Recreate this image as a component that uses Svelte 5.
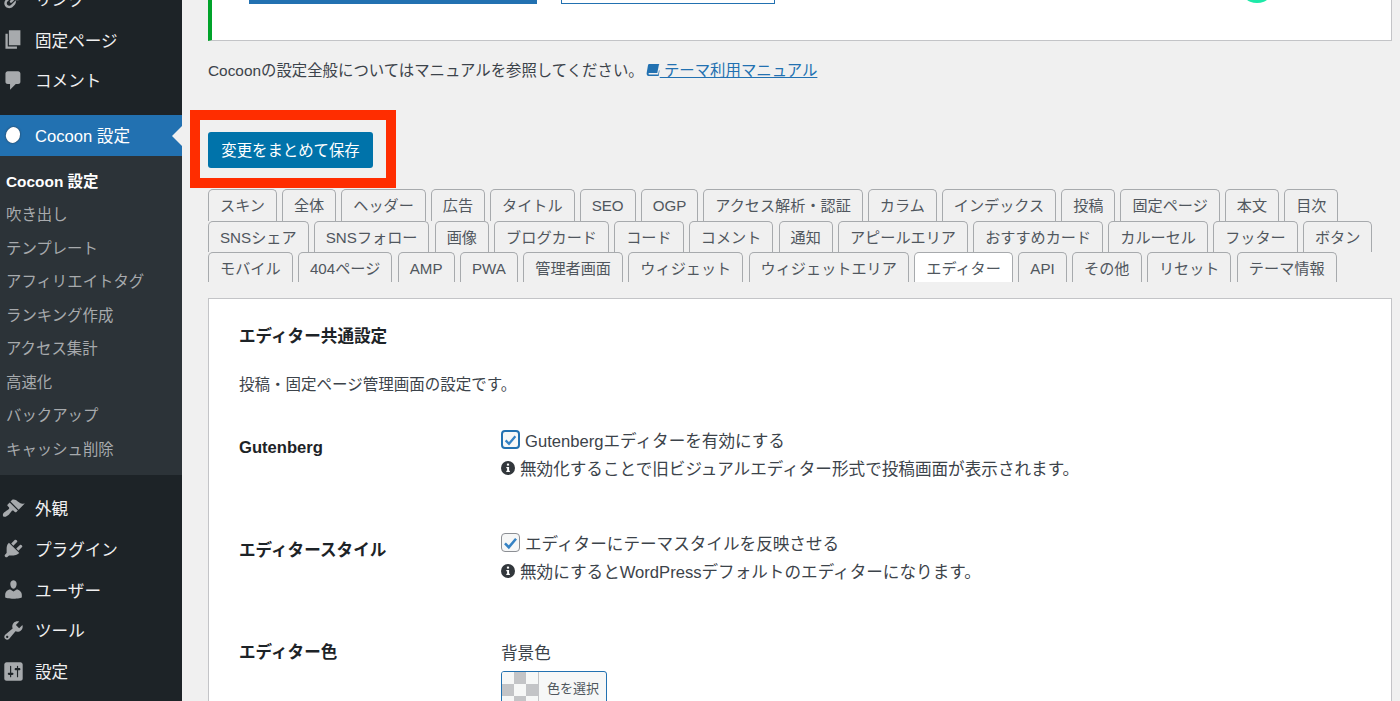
<script lang="ts">
  const icons = {
    links: 'M17.74 2.76c1.68 1.69 1.68 4.41 0 6.1l-1.53 1.52c-1.12 1.12-2.7 1.47-4.14 1.09l2.62-2.61.76-.77.76-.76c.84-.84.84-2.2 0-3.04-.84-.85-2.2-.85-3.04 0l-.77.76-3.38 3.38c-.37-1.44-.02-3.02 1.1-4.14l1.52-1.53c1.69-1.68 4.42-1.68 6.1 0zM8.59 13.43l5.34-5.34c.42-.42.42-1.1 0-1.52-.44-.43-1.13-.39-1.53 0l-5.33 5.34c-.42.42-.42 1.1 0 1.52.44.43 1.13.39 1.52 0zm-.76 2.29l4.14-4.15c.38 1.44.03 3.02-1.09 4.14l-1.52 1.53c-1.69 1.68-4.41 1.68-6.1 0-1.68-1.68-1.68-4.42 0-6.1l1.53-1.52c1.12-1.12 2.7-1.47 4.14-1.1l-4.14 4.15c-.85.84-.85 2.2 0 3.05.84.84 2.2.84 3.04 0z',
    page: 'M6 15V2h10v13H6zm-1 1h8v2H3V5h2v11z',
    comment: 'M5 2h9c1.1 0 2 .9 2 2v7c0 1.1-.9 2-2 2h-2l-5 5v-5H5c-1.1 0-2-.9-2-2V4c0-1.1.9-2 2-2z',
    brush: 'M14.48 11.06L7.41 3.99l1.5-1.5c.5-.56 2.3-.47 3.51.32 1.21.8 1.43 1.28 2.91 2.1 1.18.64 2.45 1.26 4.45.85zm-.71.71L6.7 4.7 4.93 6.47c-.39.39-.39 1.02 0 1.41l1.06 1.06c.39.39.39 1.03 0 1.42-.6.6-1.43 1.11-2.21 1.69-.35.26-.7.53-1.01.84C1.43 13.23 0 15.7 1.15 16.85c1.15 1.15 3.62-.28 4.96-1.62.31-.31.58-.66.84-1.01.58-.78 1.09-1.61 1.69-2.21.39-.39 1.03-.39 1.42 0l1.06 1.06c.39.39 1.02.39 1.41 0z',
    plugin: 'M13.11 4.36L9.87 7.6 8 5.73l3.24-3.24c.35-.34 1.05-.2 1.56.32.52.51.66 1.21.31 1.55zm-8 1.77l.91-1.12 9.01 9.01-1.19.84c-.71.71-2.63 1.16-3.82 1.16H6.14L4.9 17.26c-.59.59-1.54.59-2.12 0-.59-.58-.59-1.53 0-2.12l1.24-1.24v-3.88c0-1.13.4-3.19 1.09-3.89zm7.26 3.97l3.24-3.24c.34-.35 1.04-.21 1.55.31.52.51.66 1.21.31 1.55l-3.24 3.25z',
    user: 'M10 9.25c-2.27 0-2.73-3.44-2.73-3.44C7 4.02 7.82 2 9.97 2c2.16 0 2.98 2.02 2.71 3.81 0 0-.41 3.44-2.68 3.44zm0 2.57L12.72 10c2.39 0 4.52 2.33 4.52 4.53v2.49s-3.65 1.13-7.24 1.13c-3.65 0-7.24-1.13-7.24-1.13v-2.49c0-2.25 1.94-4.48 4.47-4.48z',
    tool: 'M16.68 9.77c-1.34 1.34-3.3 1.67-4.95.99l-5.41 6.52c-.99.99-2.59.99-3.58 0s-.99-2.59 0-3.57l6.52-5.42c-.68-1.65-.35-3.61.99-4.95 1.28-1.28 3.12-1.62 4.72-1.06l-2.89 2.89 2.82 2.82 2.86-2.87c.53 1.58.18 3.39-1.08 4.65zM3.81 16.21c.4.39 1.04.39 1.43 0 .4-.4.4-1.04 0-1.43-.39-.4-1.03-.4-1.43 0-.39.39-.39 1.03 0 1.43z',
    settings: 'M18 16V4c0-1.1-.9-2-2-2H4c-1.1 0-2 .9-2 2v12c0 1.1.9 2 2 2h12c1.1 0 2-.9 2-2zM8 11h1c.55 0 1 .45 1 1s-.45 1-1 1H8v1.5c0 .28-.22.5-.5.5s-.5-.22-.5-.5V13H6c-.55 0-1-.45-1-1s.45-1 1-1h1V5.5c0-.28.22-.5.5-.5s.5.22.5.5V11zm5-2h-1c-.55 0-1-.45-1-1s.45-1 1-1h1V5.5c0-.28.22-.5.5-.5s.5.22.5.5V7h1c.55 0 1 .45 1 1s-.45 1-1 1h-1v5.5c0 .28-.22.5-.5.5s-.5-.22-.5-.5V9z'
  };

  const topMenu = [
    { label: 'リンク', icon: icons.links },
    { label: '固定ページ', icon: icons.page },
    { label: 'コメント', icon: icons.comment }
  ];
  const subMenu = ['吹き出し', 'テンプレート', 'アフィリエイトタグ', 'ランキング作成', 'アクセス集計', '高速化', 'バックアップ', 'キャッシュ削除'];
  const bottomMenu = [
    { label: '外観', icon: icons.brush },
    { label: 'プラグイン', icon: icons.plugin },
    { label: 'ユーザー', icon: icons.user },
    { label: 'ツール', icon: icons.tool },
    { label: '設定', icon: icons.settings }
  ];

  const tabRows = [
    ['スキン', '全体', 'ヘッダー', '広告', 'タイトル', 'SEO', 'OGP', 'アクセス解析・認証', 'カラム', 'インデックス', '投稿', '固定ページ', '本文', '目次'],
    ['SNSシェア', 'SNSフォロー', '画像', 'ブログカード', 'コード', 'コメント', '通知', 'アピールエリア', 'おすすめカード', 'カルーセル', 'フッター', 'ボタン'],
    ['モバイル', '404ページ', 'AMP', 'PWA', '管理者画面', 'ウィジェット', 'ウィジェットエリア', 'エディター', 'API', 'その他', 'リセット', 'テーマ情報']
  ];
</script>

{#snippet checkbox(focused: boolean)}
  <span class="check" class:focused>
    <svg viewBox="0 0 20 20" width="18" height="18"><path d="M3.5 10.5l4.5 4.5 8.5-10" fill="none" stroke="#3582c4" stroke-width="3" /></svg>
  </span>
{/snippet}

{#snippet info()}
  <svg class="info" viewBox="0 0 14 14" width="14" height="14">
    <circle cx="7" cy="7" r="7" fill="#32373c" />
    <rect x="5.9" y="2.6" width="2.2" height="2" fill="#fff" />
    <path d="M5.3 5.9h2.8v3.8h.8v1.3H5.3V9.7h.8V7.2h-.8z" fill="#fff" />
  </svg>
{/snippet}

<div class="page">
  <aside class="sidebar">
    <ul class="menu top">
      {#each topMenu as item}
        <li><svg viewBox="0 0 20 20" width="23" height="23"><path d={item.icon} /></svg><span>{item.label}</span></li>
      {/each}
    </ul>
    <div class="current">
      <span class="blob"></span>
      <span>Cocoon 設定</span>
      <span class="arrow"></span>
    </div>
    <ul class="submenu">
      <li class="on">Cocoon 設定</li>
      {#each subMenu as item}
        <li>{item}</li>
      {/each}
    </ul>
    <ul class="menu">
      {#each bottomMenu as item}
        <li><svg viewBox="0 0 20 20" width="23" height="23"><path d={item.icon} /></svg><span>{item.label}</span></li>
      {/each}
    </ul>
  </aside>

  <main class="content">
    <div class="notice">
      <span class="bar"></span>
      <span class="outline"></span>
      <span class="mint"></span>
    </div>

    <p class="manual">
      Cocoonの設定全般についてはマニュアルを参照してください。<a href="#manual"><svg viewBox="0 0 16 14" width="14" height="12"><path d="M3.5 0H15.5l-.6 1L13 10.5H3.6c-1 0-1.3 1.7 0 1.7H14l1-5 .6.5L14.6 14H3C.8 14 .2 12 .7 10L2.2 1.2C2.4.4 2.9 0 3.5 0z" fill="#2271b1" /></svg> テーマ利用マニュアル</a>
    </p>

    <div class="save">
      <button type="button">変更をまとめて保存</button>
      <span class="marker"></span>
    </div>

    <div class="tabs">
      {#each tabRows as row}
        <div class="tab-row">
          {#each row as tab}
            <span class="tab" class:active={tab === 'エディター'}>{tab}</span>
          {/each}
        </div>
      {/each}
    </div>

    <section class="panel">
      <h3>エディター共通設定</h3>
      <p class="lead">投稿・固定ページ管理画面の設定です。</p>

      <div class="row first">
        <div class="label">Gutenberg</div>
        <div class="field">
          <div class="line">{@render checkbox(true)}Gutenbergエディターを有効にする</div>
          <div class="hint">{@render info()}無効化することで旧ビジュアルエディター形式で投稿画面が表示されます。</div>
        </div>
      </div>

      <div class="row second">
        <div class="label">エディタースタイル</div>
        <div class="field">
          <div class="line">{@render checkbox(false)}エディターにテーマスタイルを反映させる</div>
          <div class="hint">{@render info()}無効にするとWordPressデフォルトのエディターになります。</div>
        </div>
      </div>

      <div class="row third">
        <div class="label">エディター色</div>
        <div class="field">
          <div class="caption">背景色</div>
          <button class="color" type="button"><span class="swatch"></span><span class="pick">色を選択</span></button>
        </div>
      </div>
    </section>
  </main>
</div>

<style>
  :global(body) {
    margin: 0;
  }

  .page {
    display: flex;
    height: 701px;
    overflow: hidden;
    background: #f0f0f0;
    font-family: "Liberation Sans", "Noto Sans CJK JP", sans-serif;
    color: #3c434a;
  }

  ul {
    list-style: none;
    margin: 0;
    padding: 0;
  }

  .sidebar {
    flex: 0 0 182px;
    background: #1d2327;
    color: #f0f0f1;
    font-size: 16.6px;
  }

  .menu li {
    display: flex;
    align-items: center;
    height: 40.7px;
    padding-left: 1.5px;
    gap: 10.5px;
  }

  .menu.top {
    margin-top: -21.5px;
    margin-bottom: 14.4px;
  }

  .menu svg {
    fill: #a7aaad;
    flex: none;
  }

  .submenu + .menu {
    margin-top: 13px;
  }

  .current {
    position: relative;
    display: flex;
    align-items: center;
    height: 41px;
    padding-left: 6px;
    gap: 15px;
    background: #2271b1;
    color: #fff;
  }

  .blob {
    width: 14px;
    height: 16px;
    border-radius: 50%;
    background: #fff;
    box-shadow: 0 0 2px #30343a;
    transform: rotate(20deg);
  }

  .arrow {
    position: absolute;
    right: 0;
    top: 11px;
    border: 10px solid transparent;
    border-left: 0;
    border-right-color: #f0f0f0;
  }

  .submenu {
    background: #2c3338;
    padding: 7px 0 10.5px;
    font-size: 15.4px;
    color: #a7aaad;
  }

  .submenu li {
    display: flex;
    align-items: center;
    height: 33.5px;
    padding-left: 6px;
  }

  .submenu .on {
    color: #fff;
    font-weight: 700;
  }

  .content {
    flex: 1;
    padding: 0 8px 0 26px;
    min-width: 0;
  }

  .notice {
    display: flex;
    align-items: flex-start;
    height: 41px;
    overflow: hidden;
    box-sizing: border-box;
    background: #fff;
    border: 1px solid #c3c4c7;
    border-top: 0;
    border-left: 4px solid #00a32a;
    padding-left: 37px;
  }

  .bar {
    width: 288px;
    height: 4px;
    background: #2271b1;
  }

  .outline {
    width: 212px;
    height: 3px;
    margin-left: 24px;
    border: 1px solid #2271b1;
    border-top: 0;
  }

  .mint {
    width: 36px;
    height: 36px;
    margin: -33px 0 0 464px;
    border-radius: 50%;
    background: #1de9a8;
  }

  .manual {
    margin: 19px 0 0;
    height: 22px;
    line-height: 22px;
    font-size: 15.4px;
  }

  .manual a {
    color: #2271b1;
    margin-left: 2px;
  }

  .save {
    position: relative;
    margin-top: 50px;
    height: 36px;
  }

  .save button {
    display: block;
    width: 165px;
    height: 36px;
    border: 0;
    border-radius: 3px;
    background: #0073aa;
    color: #fff;
    font: inherit;
    font-size: 15.4px;
    padding: 0 0 2px;
  }

  .marker {
    position: absolute;
    left: -18px;
    top: -22px;
    width: 206px;
    height: 78px;
    box-sizing: border-box;
    border: 10px solid #ff2d00;
  }

  .tabs {
    margin-top: 21px;
  }

  .tab-row {
    display: flex;
    gap: 5px;
    height: 31.5px;
  }

  .tab-row:nth-child(2) {
    gap: 5.2px;
  }

  .tab-row:last-child {
    gap: 5.4px;
  }

  .tab {
    box-sizing: border-box;
    height: 31.5px;
    padding: 0 11px;
    line-height: 31px;
    font-size: 15.15px;
    white-space: nowrap;
    color: #50575e;
    border: 1px solid #a7aaad;
    border-bottom: 0;
    border-radius: 5px 5px 0 0;
    background: #f0f0f0;
  }

  .tab-row:last-child .tab {
    height: 30px;
  }

  .tab.active {
    background: #fff;
  }

  .panel {
    margin-top: 14px;
    height: 500px;
    box-sizing: border-box;
    background: #fff;
    border: 1px solid #c3c4c7;
    padding: 0 30px;
  }

  h3 {
    margin: 28px 0 0;
    font-size: 16.6px;
    line-height: 20px;
    color: #1d2327;
  }

  .lead {
    margin: 28px 0 0;
    font-size: 15.5px;
    line-height: 20px;
  }

  .row {
    display: flex;
  }

  .row.first {
    margin-top: 34px;
  }

  .row.second {
    margin-top: 53px;
  }

  .row.third {
    margin-top: 52px;
  }

  .label {
    flex: 0 0 262px;
    padding-top: 9px;
    font-size: 16.6px;
    font-weight: 700;
    line-height: 20px;
    color: #1d2327;
  }

  .field {
    font-size: 16.6px;
  }

  .line {
    display: flex;
    align-items: center;
    gap: 5px;
    height: 22px;
  }

  .hint {
    display: flex;
    align-items: center;
    gap: 5px;
    height: 22px;
    margin-top: 6px;
  }

  .check {
    display: flex;
    align-items: center;
    justify-content: center;
    box-sizing: border-box;
    width: 19px;
    height: 19px;
    background: #f6f7f7;
    border: 1px solid #8c8f94;
    border-radius: 4px;
  }

  .check.focused {
    border: 2px solid #2271b1;
  }

  .caption {
    height: 20px;
    margin-top: 10px;
    line-height: 20px;
  }

  .color {
    display: flex;
    width: 106px;
    height: 40px;
    margin-top: 7px;
    padding: 0;
    box-sizing: border-box;
    border: 1px solid #2271b1;
    border-radius: 3px;
    background: #f6f7f7;
    font: inherit;
    overflow: hidden;
  }

  .swatch {
    width: 36px;
    height: 100%;
    border-right: 1px solid #c3c4c7;
    background: repeating-conic-gradient(#c3c4c7 0 25%, #f6f7f7 0 50%) 0 0 / 24px 24px;
  }

  .pick {
    margin-left: 8px;
    font-size: 13px;
    line-height: 34px;
    color: #50575e;
  }
</style>
